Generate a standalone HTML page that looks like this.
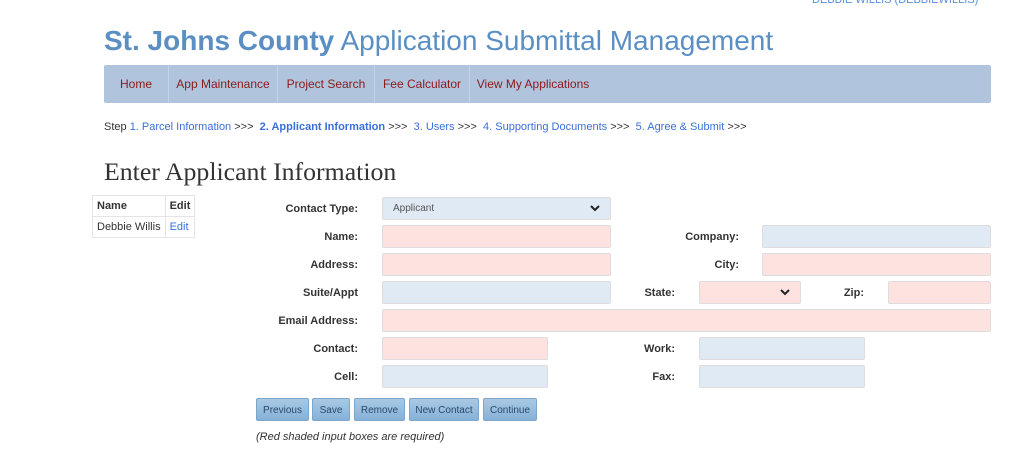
<!DOCTYPE html>
<html><head><meta charset="utf-8"><style>
body{margin:0;width:1024px;height:475px;background:#fff;font-family:"Liberation Sans",Arial,sans-serif;position:relative;overflow:hidden}
.a{position:absolute}
.user{left:812px;top:-6px;font-size:11px;color:#5a8fd8;}
.title{left:104px;top:25px;font-size:28px;color:#5b8fc4;white-space:nowrap}
.nav{left:104px;top:65px;width:887px;height:38px;background:#b0c4de;border-radius:2px}
.nav span{position:absolute;top:0;height:38px;line-height:38px;font-size:12px;color:#8b1a1a;text-align:center;border-right:1px solid #c4d3e6}
.steps{left:104px;top:121px;font-size:11px;color:#333;white-space:nowrap}
.steps a{color:#3a6fd8;text-decoration:none}
.h{left:104px;top:157px;font-family:"Liberation Serif",serif;font-size:25.8px;color:#333}
table{position:absolute;left:92px;top:195px;border-collapse:collapse;font-size:11px;color:#333}
td,th{border:1px solid #e4e4e4;padding:3px 4px;text-align:left;height:14px}
.l{font-size:11px;font-weight:bold;color:#333;text-align:right;width:120px;line-height:22px}
.i{height:21px;border:1px solid #ddd;border-radius:2px;box-sizing:content-box}
.r{background:#fde2e0}.b{background:#e0eaf4}
.btn{top:398px;height:23px;line-height:23px;font-size:10px;color:#2a4a6a;background:linear-gradient(#a9c9e4,#86b1d8);border:1px solid #7ca6cc;border-radius:2px;text-align:center;box-sizing:border-box}
.chev{position:absolute;right:10px;top:5px}
</style></head><body>
<div class="a user">DEBBIE WILLIS (DEBBIEWILLIS)</div>
<div class="a title"><b>St. Johns County</b> Application Submittal Management</div>
<div class="a nav">
<span style="left:0;width:64px">Home</span>
<span style="left:65px;width:108px">App Maintenance</span>
<span style="left:174px;width:96px">Project Search</span>
<span style="left:271px;width:94px">Fee Calculator</span>
<span style="left:366px;width:126px;border:none">View My Applications</span>
</div>
<div class="a steps">Step <a>1. Parcel Information</a> &gt;&gt;&gt; &nbsp;<a><b>2. Applicant Information</b></a> &gt;&gt;&gt; &nbsp;<a>3. Users</a> &gt;&gt;&gt; &nbsp;<a>4. Supporting Documents</a> &gt;&gt;&gt; &nbsp;<a>5. Agree &amp; Submit</a> &gt;&gt;&gt;</div>
<div class="a h">Enter Applicant Information</div>
<table><tr><th>Name</th><th>Edit</th></tr><tr><td>Debbie Willis</td><td style="color:#3a6fd8">Edit</td></tr></table>

<div class="a l" style="left:238px;top:198px">Contact Type:</div>
<div class="a i b" style="left:382px;top:197px;width:227px"><span style="position:absolute;left:10px;top:5px;font-size:10px;color:#555">Applicant</span><svg class="chev" width="10" height="10" viewBox="0 0 10 10"><path d="M1 3l4 4 4-4" stroke="#222" stroke-width="2" fill="none"/></svg></div>
<div class="a l" style="left:238px;top:226px">Name:</div>
<div class="a i r" style="left:382px;top:225px;width:227px"></div>
<div class="a l" style="left:238px;top:254px">Address:</div>
<div class="a i r" style="left:382px;top:253px;width:227px"></div>
<div class="a l" style="left:238px;top:282px">Suite/Appt</div>
<div class="a i b" style="left:382px;top:281px;width:227px"></div>
<div class="a l" style="left:238px;top:310px">Email Address:</div>
<div class="a i r" style="left:382px;top:309px;width:607px"></div>
<div class="a l" style="left:238px;top:338px">Contact:</div>
<div class="a i r" style="left:382px;top:337px;width:164px"></div>
<div class="a l" style="left:238px;top:366px">Cell:</div>
<div class="a i b" style="left:382px;top:365px;width:164px"></div>

<div class="a l" style="left:619px;top:226px">Company:</div>
<div class="a i b" style="left:762px;top:225px;width:227px"></div>
<div class="a l" style="left:619px;top:254px">City:</div>
<div class="a i r" style="left:762px;top:253px;width:227px"></div>
<div class="a l" style="left:555px;top:282px">State:</div>
<div class="a i r" style="left:699px;top:281px;width:100px"><svg class="chev" width="10" height="10" viewBox="0 0 10 10"><path d="M1 3l4 4 4-4" stroke="#222" stroke-width="2" fill="none"/></svg></div>
<div class="a l" style="left:744px;top:282px">Zip:</div>
<div class="a i r" style="left:888px;top:281px;width:101px"></div>
<div class="a l" style="left:555px;top:338px">Work:</div>
<div class="a i b" style="left:699px;top:337px;width:164px"></div>
<div class="a l" style="left:555px;top:366px">Fax:</div>
<div class="a i b" style="left:699px;top:365px;width:164px"></div>

<div class="a btn" style="left:256px;width:53px">Previous</div>
<div class="a btn" style="left:312px;width:38px">Save</div>
<div class="a btn" style="left:354px;width:51px">Remove</div>
<div class="a btn" style="left:409px;width:70px">New Contact</div>
<div class="a btn" style="left:483px;width:54px">Continue</div>
<div class="a" style="left:256px;top:431px;font-size:11px;font-style:italic;color:#333">(Red shaded input boxes are required)</div>
</body></html>
